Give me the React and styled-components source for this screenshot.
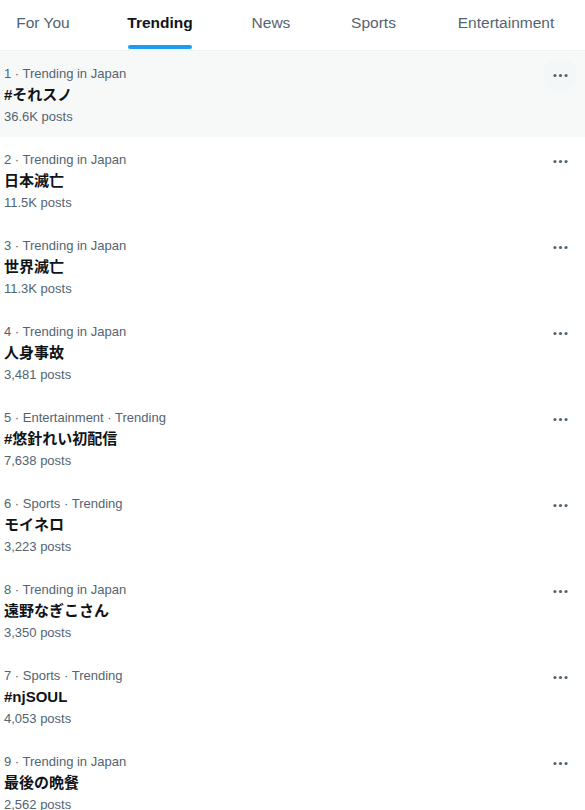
import React from "react";
import styled, { createGlobalStyle } from "styled-components";

const Global = createGlobalStyle`
  html, body { margin: 0; padding: 0; background: #fff; }
  body { font-family: "Segoe UI", "Liberation Sans", "Noto Sans CJK JP", sans-serif; color: #0f1419; }
`;

const Page = styled.div`
  width: 585px;
  background: #fff;
`;

const TabBar = styled.nav`
  display: flex;
  gap: 59px;
  height: 51px;
  border-bottom: 1px solid #eff3f4;
  box-sizing: border-box;
  padding-left: 17px;
`;

const Tab = styled.div`
  position: relative;
  display: flex;
  align-items: center;
  justify-content: center;
  flex: none;
  width: ${(p) => p.$w}px;
  height: 100%;
  font-size: 15.5px;
  font-weight: ${(p) => (p.$active ? 700 : 400)};
  color: ${(p) => (p.$active ? "#0f1419" : "#536471")};
  padding-bottom: 4px;
  box-sizing: border-box;
  white-space: nowrap;
`;

const Underline = styled.span`
  position: absolute;
  left: 0;
  right: 0;
  bottom: 1px;
  height: 4px;
  border-radius: 2px;
  background: #1d9bf0;
`;

const List = styled.div`
  display: flex;
  flex-direction: column;
`;

const Row = styled.div`
  position: relative;
  display: flex;
  flex-direction: column;
  height: 86px;
  box-sizing: border-box;
  padding: 15px 16px 0 4px;
  background: ${(p) => (p.$hover ? "#f7f9f9" : "#fff")};
`;

const Meta = styled.div`
  font-size: 13px;
  line-height: 16px;
  color: #536471;
`;

const Title = styled.div`
  margin-top: 3px;
  font-size: 15px;
  line-height: 20px;
  font-weight: 700;
  color: #0f1419;
`;

const Posts = styled.div`
  margin-top: 4px;
  font-size: 13px;
  line-height: 16px;
  color: #536471;
`;

const More = styled.div`
  position: absolute;
  top: 7px;
  right: 8px;
  width: 34px;
  height: 34px;
  border-radius: 50%;
  display: flex;
  align-items: center;
  justify-content: center;
  color: #536471;
  background: ${(p) => (p.$hover ? "#f4f7f7" : "transparent")};
`;

const Dots = () => (
  <svg width="19" height="19" viewBox="0 0 24 24" fill="currentColor">
    <circle cx="5" cy="12" r="2" />
    <circle cx="12" cy="12" r="2" />
    <circle cx="19" cy="12" r="2" />
  </svg>
);

const tabs = [
  { label: "For You", w: 52 },
  { label: "Trending", w: 64, active: true },
  { label: "News", w: 40 },
  { label: "Sports", w: 47 },
  { label: "Entertainment", w: 100 },
];

const trends = [
  { meta: "1 · Trending in Japan", title: "#それスノ", posts: "36.6K posts" },
  { meta: "2 · Trending in Japan", title: "日本滅亡", posts: "11.5K posts" },
  { meta: "3 · Trending in Japan", title: "世界滅亡", posts: "11.3K posts" },
  { meta: "4 · Trending in Japan", title: "人身事故", posts: "3,481 posts" },
  { meta: "5 · Entertainment · Trending", title: "#悠針れい初配信", posts: "7,638 posts" },
  { meta: "6 · Sports · Trending", title: "モイネロ", posts: "3,223 posts" },
  { meta: "8 · Trending in Japan", title: "遠野なぎこさん", posts: "3,350 posts" },
  { meta: "7 · Sports · Trending", title: "#njSOUL", posts: "4,053 posts" },
  { meta: "9 · Trending in Japan", title: "最後の晩餐", posts: "2,562 posts" },
];

export default function App() {
  return (
    <Page>
      <Global />
      <TabBar>
        {tabs.map((t) => (
          <Tab key={t.label} $active={t.active} $w={t.w}>
            {t.label}
            {t.active && <Underline />}
          </Tab>
        ))}
      </TabBar>
      <List>
        {trends.map((t, i) => (
          <Row key={i} $hover={i === 0}>
            <Meta>{t.meta}</Meta>
            <Title>{t.title}</Title>
            <Posts>{t.posts}</Posts>
            <More $hover={i === 0}>
              <Dots />
            </More>
          </Row>
        ))}
      </List>
    </Page>
  );
}
